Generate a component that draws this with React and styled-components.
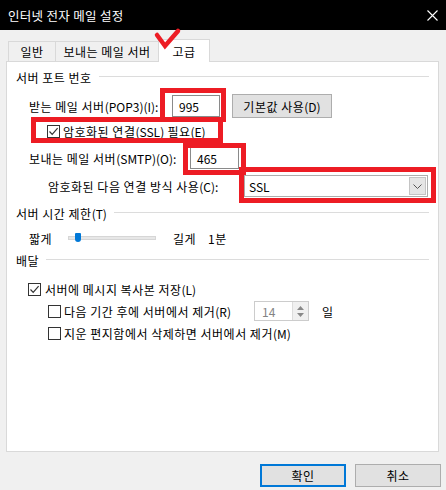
import React from 'react'
import styled, { createGlobalStyle } from 'styled-components'

const GlobalStyle = createGlobalStyle`
  html, body {
    margin: 0;
    padding: 0;
    background: #f0f0f0;
  }
  body {
    font-family: "Noto Sans CJK KR", "Noto Sans", sans-serif;
    font-size: 12px;
    letter-spacing: 0.5px;
    color: #000;
  }
  * { box-sizing: border-box; }
`

const Check = ({ checked }) => (
  <CheckBox>
    {checked && (
      <svg width="11" height="11" viewBox="0 0 11 11">
        <polyline points="1.5,5.5 4.2,8.3 9.6,2.2" fill="none" stroke="#333" strokeWidth="1.2" />
      </svg>
    )}
  </CheckBox>
)

const App = () => {
  return (
    <Window>
      <GlobalStyle />
      <TitleBar>
        <span>인터넷 전자 메일 설정</span>
        <svg width="11" height="11" viewBox="0 0 11 11">
          <path d="M0.5 0.5 L10.5 10.5 M10.5 0.5 L0.5 10.5" stroke="#fff" strokeWidth="1.1" />
        </svg>
      </TitleBar>

      <Body>
        <TabBar>
          <Tab width={48}>일반</Tab>
          <Tab width={104}>보내는 메일 서버</Tab>
          <Tab width={52} active>고급</Tab>
        </TabBar>

        <Panel>
          <Row>
            <span>서버 포트 번호</span>
            <Rule />
          </Row>
          <Row top={7} pad={13}>
            <Label width={143}>받는 메일 서버<En>(POP3)(I):</En></Label>
            <TextBox width={48}>995</TextBox>
            <Button width={100} left={12}>기본값 사용<En>(D)</En></Button>
          </Row>
          <Row top={3} pad={31}>
            <Check checked />
            <CheckText gap={3}>암호화된 연결<En>(SSL)</En> 필요<En>(E)</En></CheckText>
          </Row>
          <Row top={5} pad={13}>
            <Label width={161}>보내는 메일 서버<En>(SMTP)(O):</En></Label>
            <TextBox width={49}>465</TextBox>
          </Row>
          <Row top={6} pad={32}>
            <Label width={196}>암호화된 다음 연결 방식 사용<En>(C):</En></Label>
            <Select>
              <En>SSL</En>
              <SelectArrow>
                <svg width="9" height="5" viewBox="0 0 9 5">
                  <polyline points="0.5,0.5 4.5,4.5 8.5,0.5" fill="none" stroke="#555" strokeWidth="1" />
                </svg>
              </SelectArrow>
            </Select>
          </Row>

          <Row top={5}>
            <span>서버 시간 제한<En>(T)</En></span>
            <Rule />
          </Row>
          <Row top={3} pad={13}>
            <Label width={39}>짧게</Label>
            <Track>
              <Thumb />
            </Track>
            <Label width={35} left={17}>길게</Label>
            <span>1분</span>
          </Row>

          <Row top={0}>
            <span>배달</span>
            <Rule />
          </Row>
          <Row top={7} pad={12}>
            <Check checked />
            <CheckText gap={4}>서버에 메시지 복사본 저장<En>(L)</En></CheckText>
          </Row>
          <Row top={0} pad={32}>
            <Check />
            <CheckText gap={3} width={190}>다음 기간 후에 서버에서 제거<En>(R)</En></CheckText>
            <Spin>
              <SpinValue>14</SpinValue>
              <SpinButtons>
                <svg width="7" height="4" viewBox="0 0 7 4"><polygon points="0,4 3.5,0 7,4" fill="#888" /></svg>
                <svg width="7" height="4" viewBox="0 0 7 4"><polygon points="0,0 7,0 3.5,4" fill="#888" /></svg>
              </SpinButtons>
            </Spin>
            <Label left={13}>일</Label>
          </Row>
          <Row top={0} pad={32}>
            <Check />
            <CheckText gap={3}>지운 편지함에서 삭제하면 서버에서 제거<En>(M)</En></CheckText>
          </Row>
        </Panel>

        <Footer>
          <Button width={86} height={23} primary>확인</Button>
          <Button width={86} height={23}>취소</Button>
        </Footer>
      </Body>

      {/* red annotations drawn over the dialog */}
      <Mark x={160} y={88} w={66} h={34} />
      <Mark x={31} y={117} w={192} h={26} />
      <Mark x={183} y={143} w={63} h={32} />
      <Mark x={239} y={167} w={197} h={36} />
      <Tick viewBox="0 0 34 24" width="34" height="24">
        <polyline points="6,8 14,19 27,4" fill="none" stroke="#ed1c24" strokeWidth="4.5" strokeLinecap="round" />
      </Tick>
    </Window>
  )
}

const Window = styled.div`
  position: relative;
  width: 446px;
  height: 490px;
  display: flex;
  flex-direction: column;
  background: #f0f0f0;
  overflow: hidden;
`

const TitleBar = styled.div`
  height: 30px;
  flex: none;
  background: #000;
  color: #fff;
  display: flex;
  align-items: center;
  justify-content: space-between;
  padding: 0 8px 0 8px;
  font-size: 12.5px;
  letter-spacing: 0.3px;
`

const Body = styled.div`
  padding: 9px 8px 0 6px;
`

const TabBar = styled.div`
  display: flex;
  align-items: flex-end;
  height: 22px;
  padding-left: 2px;
`

const Tab = styled.div`
  position: relative;
  width: ${p => p.width}px;
  height: ${p => (p.active ? 23 : 20)}px;
  margin-left: -1px;
  margin-bottom: ${p => (p.active ? -1 : 0)}px;
  z-index: ${p => (p.active ? 1 : 0)};
  border: 1px solid #d9d9d9;
  border-bottom: none;
  background: ${p => (p.active ? '#fff' : '#f0f0f0')};
  display: flex;
  align-items: center;
  justify-content: center;
  padding-top: ${p => (p.active ? 1 : 0)}px;
  &:first-child { margin-left: 0; }
`

const Panel = styled.div`
  width: 433px;
  height: 391px;
  border: 1px solid #d9d9d9;
  background: #fff;
  padding: 4px 9px 0 9px;
  display: flex;
  flex-direction: column;
`

const Row = styled.div`
  height: 22px;
  flex: none;
  display: flex;
  align-items: center;
  margin-top: ${p => p.top || 0}px;
  padding-left: ${p => p.pad || 0}px;
  white-space: nowrap;
`

const En = styled.span`
  letter-spacing: 0;
`

const Rule = styled.div`
  flex: 1;
  height: 1px;
  background: #dcdcdc;
  margin-left: 7px;
  margin-top: -1px;
`

const Label = styled.span`
  display: inline-block;
  width: ${p => (p.width ? `${p.width}px` : 'auto')};
  margin-left: ${p => p.left || 0}px;
  flex: none;
`

const TextBox = styled.div`
  width: ${p => p.width}px;
  height: 22px;
  border: 1px solid #8a8a8a;
  background: #fff;
  padding-left: 6px;
  display: flex;
  align-items: center;
  letter-spacing: 0;
  flex: none;
`

const Button = styled.div`
  width: ${p => p.width}px;
  height: ${p => p.height || 24}px;
  margin-left: ${p => p.left || 0}px;
  background: #e1e1e1;
  border: ${p => (p.primary ? '2px solid #0078d7' : '1px solid #adadad')};
  display: flex;
  align-items: center;
  justify-content: center;
  flex: none;
`

const CheckBox = styled.div`
  width: 13px;
  height: 13px;
  border: 1px solid #333;
  background: #fff;
  flex: none;
  display: flex;
  align-items: center;
  justify-content: center;
`

const CheckText = styled.span`
  margin-left: ${p => p.gap}px;
  width: ${p => (p.width ? `${p.width}px` : 'auto')};
  flex: none;
`

const Select = styled.div`
  width: 184px;
  height: 22px;
  border: 1px solid #adadad;
  background: #fff;
  display: flex;
  align-items: center;
  justify-content: space-between;
  padding: 0 1px 0 4px;
  flex: none;
`

const SelectArrow = styled.div`
  width: 17px;
  height: 18px;
  background: #e5e5e5;
  border: 1px solid #c4c4c4;
  display: flex;
  align-items: center;
  justify-content: center;
`

const Track = styled.div`
  position: relative;
  width: 88px;
  height: 4px;
  background: #e7e7e7;
  border: 1px solid #d6d6d6;
  flex: none;
`

const Thumb = styled.div`
  position: absolute;
  left: 6px;
  top: -4px;
  width: 6px;
  height: 9px;
  background: #0078d7;
  border-radius: 1px 1px 3px 3px;
`

const Spin = styled.div`
  width: 55px;
  height: 20px;
  border: 1px solid #cccccc;
  background: #fff;
  display: flex;
  align-items: stretch;
  flex: none;
`

const SpinValue = styled.span`
  flex: 1;
  color: #838383;
  padding-left: 7px;
  letter-spacing: 0;
  display: flex;
  align-items: center;
`

const SpinButtons = styled.div`
  width: 16px;
  border-left: 1px solid #dcdcdc;
  background: #f0f0f0;
  display: flex;
  flex-direction: column;
  align-items: center;
  justify-content: space-around;
  padding: 2px 0;
`

const Footer = styled.div`
  display: flex;
  justify-content: flex-end;
  gap: 9px;
  padding: 12px 0 0 0;
  margin-right: -3px;
`

const Mark = styled.div.attrs(p => ({
  style: { left: p.x, top: p.y, width: p.w, height: p.h },
}))`
  position: absolute;
  z-index: 5;
  border: 5px solid #ed1c24;
  pointer-events: none;
`

const Tick = styled.svg`
  position: absolute;
  z-index: 5;
  left: 151px;
  top: 27px;
`

export default App
